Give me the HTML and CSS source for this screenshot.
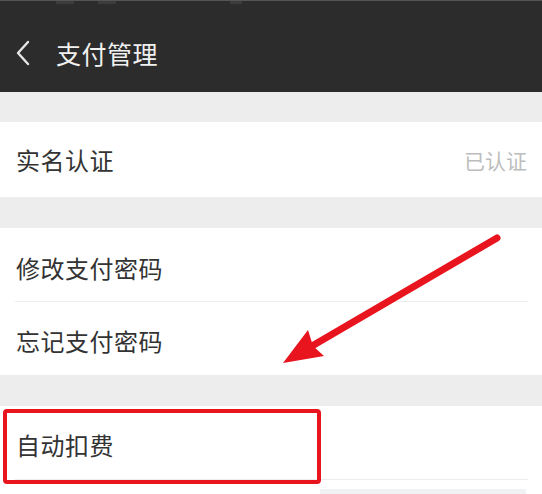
FILE: index.html
```html
<!DOCTYPE html>
<html lang="zh">
<head>
<meta charset="utf-8">
<title>支付管理</title>
<link rel="stylesheet" href="styles.css">
</head>
<body>
<div class="screen">
  <header class="topbar">
    <div class="status">
      <span class="sig"></span><span class="sig s2"></span><span class="sig s3"></span>
    </div>
    <div class="nav">
      <svg class="back" width="16" height="26" viewBox="0 0 16 26"><path d="M13 2 L3 13 L13 24" fill="none" stroke="#e6e6e6" stroke-width="2.4" stroke-linecap="round" stroke-linejoin="round"/></svg>
      <h1 class="title">支付管理</h1>
    </div>
  </header>
  <div class="gap g1"></div>
  <section class="group">
    <div class="row r1"><span class="label">实名认证</span><span class="value">已认证</span></div>
  </section>
  <div class="gap g2"></div>
  <section class="group">
    <div class="row r2"><span class="label">修改支付密码</span></div>
    <div class="divider"></div>
    <div class="row r3"><span class="label">忘记支付密码</span></div>
  </section>
  <div class="gap g3"></div>
  <section class="group">
    <div class="row r4"><span class="label">自动扣费</span></div>
    <div class="divider"></div>
    <div class="peek"></div>
  </section>

  <div class="highlight"></div>
  <svg class="arrow" width="542" height="494" viewBox="0 0 542 494">
    <line x1="497" y1="238" x2="312" y2="346" stroke="#e8141e" stroke-width="7" stroke-linecap="round"/>
    <polygon points="283,363 308,330 313,346 324,356" fill="#e8141e"/>
  </svg>
</div>
</body>
</html>
```
FILE: styles.css
```css
* { box-sizing: border-box; margin: 0; padding: 0; }
html, body { width: 542px; height: 494px; overflow: hidden; background: #ffffff; }
body { font-family: "Noto Sans CJK SC", "Noto Sans", sans-serif; }
.screen { position: relative; width: 542px; height: 494px; background: #ffffff; }

.topbar { height: 92px; background: #2c2c2c; display: flex; flex-direction: column; }
.status { height: 4px; border-top: 1px solid #555; display: flex; gap: 14px; padding-left: 56px; }
.sig { width: 18px; height: 3px; background: #3c3c3c; }
.s2 { margin-left: 10px; }
.s3 { width: 12px; margin-left: 100px; }
.nav { flex: 1; display: flex; align-items: center; padding-left: 15px; padding-top: 10px; }
.back { display: block; }
.title { margin-left: 25px; font-size: 25px; font-weight: 400; color: #f0f0f0; letter-spacing: 0.5px; }

.gap { background: #ededed; }
.g1 { height: 30px; }
.g2 { height: 31px; }
.g3 { height: 31px; }

.group { background: #ffffff; }
.row { display: flex; align-items: center; justify-content: space-between; padding: 0 15px 0 16px; }
.r1 { height: 75px; }
.r2 { height: 73px; padding-top: 5px; }
.r3 { height: 73px; padding-top: 3px; }
.r4 { height: 73px; padding-top: 4px; }
.label { font-size: 24px; color: #333333; letter-spacing: 0.5px; }
.value { font-size: 21px; color: #bdbdbd; }
.divider { height: 1px; background: #ececec; margin: 0 14px 0 15px; }
.peek { height: 14px; background: #ffffff; position: relative; }
.peek::after { content: ""; position: absolute; left: 320px; right: 16px; top: 9px; height: 5px; background: #f1f2f4; }

.highlight { position: absolute; left: 3px; top: 409px; width: 318px; height: 75px; border: 4px solid #e8141e; border-radius: 4px; }
.arrow { position: absolute; left: 0; top: 0; }
```
